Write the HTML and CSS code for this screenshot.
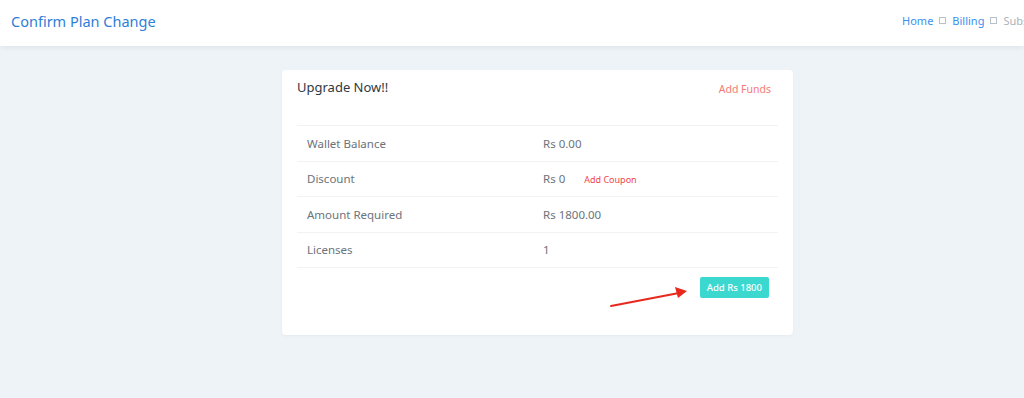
FILE: index.html
```html
<!DOCTYPE html>
<html lang="en">
<head>
    <meta charset="UTF-8">
    <meta name="viewport" content="width=device-width, initial-scale=1.0">
    <title>Confirm Plan Change</title>
    <link rel="stylesheet" href="styles.css">
</head>
<body>
    <header class="topbar">
        <h1 class="page-title">Confirm Plan Change</h1>
        <nav class="breadcrumb">
            <a href="#">Home</a>
            <span class="sep"></span>
            <a href="#">Billing</a>
            <span class="sep"></span>
            <span class="current">Subscription</span>
        </nav>
    </header>

    <main class="content">
        <div class="card">
            <div class="card-head">
                <h2>Upgrade Now!!</h2>
                <a href="#" class="add-funds">Add Funds</a>
            </div>

            <table class="summary">
                <tr>
                    <td class="label">Wallet Balance</td>
                    <td>Rs 0.00</td>
                </tr>
                <tr>
                    <td class="label">Discount</td>
                    <td>Rs 0 <a href="#" class="coupon">Add Coupon</a></td>
                </tr>
                <tr>
                    <td class="label">Amount Required</td>
                    <td>Rs 1800.00</td>
                </tr>
                <tr>
                    <td class="label">Licenses</td>
                    <td>1</td>
                </tr>
            </table>

            <div class="card-foot">
                <button class="btn-add">Add Rs 1800</button>
            </div>

            <!-- annotation arrow -->
            <svg class="arrow" width="90" height="24" viewBox="0 0 90 24">
                <line x1="2" y1="20" x2="70" y2="7" stroke="#e8281c" stroke-width="2" stroke-linecap="round"/>
                <polygon points="78,5 66,1 69,12" fill="#e8281c"/>
            </svg>
        </div>
    </main>
</body>
</html>
```

FILE: styles.css
```css
body {
    margin: 0;
    font-family: "Noto Sans", Arial, sans-serif;
    background-color: #edf3f6;
    height: 398px;
    overflow: hidden;
}
.topbar {
    height: 46px;
    box-sizing: border-box;
    padding: 0 0 5px 11px;
    background-color: #fff;
    box-shadow: 0 1px 6px rgba(0, 0, 0, 0.08);
    display: flex;
    align-items: center;
    justify-content: space-between;
    overflow: hidden;
    white-space: nowrap;
}
.page-title {
    margin: 0;
    font-size: 14.5px;
    font-weight: 400;
    color: #2f7ed8;
}
.breadcrumb {
    display: flex;
    align-items: center;
    gap: 6px;
    font-size: 11px;
    margin-right: -44px;
}
.breadcrumb a {
    color: #3b8ff0;
    text-decoration: none;
}
.breadcrumb .current {
    color: #a9b2bc;
}
.sep {
    width: 5px;
    height: 5px;
    border: 1px solid #b8c0c8;
}
.content {
    padding: 24px 0 0 282px;
}
.card {
    position: relative;
    width: 481px;
    padding: 7px 15px 37px;
    background-color: #fff;
    border-radius: 4px;
    box-shadow: 0 1px 3px rgba(0, 0, 0, 0.04);
}
.card-head {
    display: flex;
    justify-content: space-between;
    align-items: flex-start;
    margin-bottom: 28px;
}
.card-head h2 {
    margin: 0;
    font-size: 13px;
    font-weight: 400;
    color: #2f3842;
    line-height: 20px;
}
.add-funds {
    color: #f47a74;
    font-size: 10.5px;
    text-decoration: none;
    margin: 5px 7px 0 0;
}
.summary {
    width: 100%;
    border-collapse: collapse;
    font-size: 11.5px;
    color: #6b737b;
}
.summary td {
    border-top: 1px solid #f0f2f4;
    height: 34.5px;
    padding: 0 10px;
}
.summary tr:last-child td {
    border-bottom: 1px solid #f0f2f4;
}
.summary td.label {
    width: 216px;
}
.coupon {
    color: #f0454a;
    font-size: 9px;
    text-decoration: none;
    margin-left: 16px;
}
.card-foot {
    display: flex;
    justify-content: flex-end;
    padding: 9px 9px 0 0;
}
.btn-add {
    background-color: #3ad8cf;
    color: #fff;
    border: none;
    border-radius: 2px;
    font-family: inherit;
    font-size: 9.5px;
    font-weight: 500;
    height: 21px;
    padding: 0 7px;
}
.arrow {
    position: absolute;
    left: 327px;
    top: 216px;
}
```
